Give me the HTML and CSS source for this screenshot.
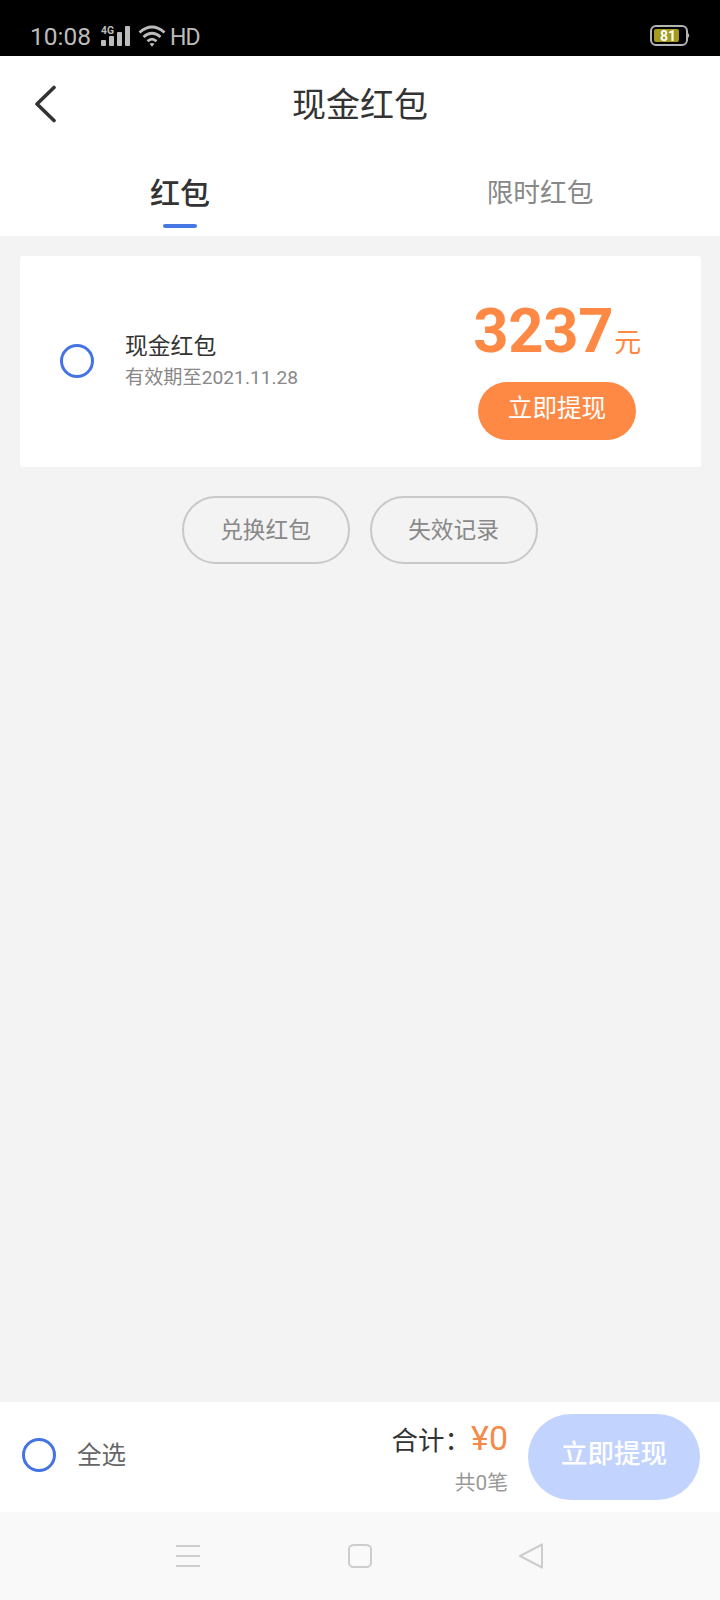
FILE: index.html
```
<!DOCTYPE html>
<html lang="zh-CN">

<head>
    <meta charset="UTF-8">
    <meta name="viewport" content="width=device-width, initial-scale=1.0">
    <title>现金红包</title>
    <link rel="stylesheet" href="styles.css">
</head>

<body>
    <div class="status-bar">
        <span class="time">10:08</span>
        <svg class="signal" width="30" height="21" viewBox="0 0 30 21">
            <text x="0" y="9" textLength="13" lengthAdjust="spacingAndGlyphs">4G</text>
            <rect x="0" y="15" width="5" height="6" rx="1" />
            <rect x="8" y="11" width="5" height="10" rx="1" />
            <rect x="16" y="7" width="5" height="14" rx="1" />
            <rect x="24" y="1" width="5" height="20" rx="1" />
        </svg>
        <svg class="wifi" width="28" height="22" viewBox="0 0 28 22">
            <path d="M1.5 7.5Q14 -3.5 26.5 7.5" />
            <path d="M5.5 12Q14 4.5 22.5 12" />
            <path d="M9.5 16.2Q14 12 18.5 16.2" />
            <path class="dot" d="M11.5 18.7Q14 17.500 16.5 18.7L14 21.8z" />
        </svg>
        <span class="hd">HD</span>
        <svg class="battery" width="42" height="22" viewBox="0 0 42 22">
            <rect class="shell" x="1" y="1" width="36" height="19" rx="5" />
            <path class="nub" d="M38 8q2.500 2.500 0 5z" />
            <rect class="level" x="4" y="4" width="25" height="13" rx="2" />
            <text x="10" y="15.500">81</text>
        </svg>
    </div>

    <header class="header">
        <svg class="back" width="24" height="38" viewBox="0 0 24 38">
            <path d="M20 2.500L3 19L20 35.500" />
        </svg>
        <h1>现金红包</h1>
    </header>

    <nav class="tabs">
        <div class="tab active">红包</div>
        <div class="tab">限时红包</div>
    </nav>

    <main class="content">
        <div class="card">
            <span class="radio"></span>
            <div class="info">
                <div class="name">现金红包</div>
                <div class="expire">有效期至2021.11.28</div>
            </div>
            <div class="right">
                <div class="amount">3237<span class="unit">元</span></div>
                <button class="withdraw" type="button">立即提现</button>
            </div>
        </div>
        <div class="links">
            <button class="pill" type="button">兑换红包</button>
            <button class="pill" type="button">失效记录</button>
        </div>
    </main>

    <footer class="footer">
        <span class="radio"></span>
        <span class="all">全选</span>
        <div class="total">
            <div class="sum">合计：<span class="price">¥0</span></div>
            <div class="count">共0笔</div>
        </div>
        <button class="submit" type="button">立即提现</button>
    </footer>

    <div class="nav-bar">
        <svg width="26" height="26" viewBox="0 0 26 26">
            <path d="M1 3H25M1 13H25M1 23H25" />
        </svg>
        <svg width="26" height="26" viewBox="0 0 26 26">
            <rect x="2" y="2" width="22" height="22" rx="4.500" />
        </svg>
        <svg width="26" height="26" viewBox="0 0 26 26">
            <path d="M23 1.500V24.500L1 13z" />
        </svg>
    </div>
</body>

</html>
```
FILE: styles.css
```
* {
    box-sizing: border-box;
}

body {
    margin: 0;
    width: 720px;
    height: 1600px;
    display: flex;
    flex-direction: column;
    background: #f3f3f3;
    color: #333;
    font-family: Roboto, "Noto Sans CJK SC", sans-serif;
}

button {
    border: 0;
    padding: 0;
    font-family: inherit;
}

.status-bar {
    height: 56px;
    padding: 24px 29px 0 30px;
    display: flex;
    align-items: flex-start;
    background: #000;
    color: #bcbcbc;
    line-height: 26px;
}

.time {
    width: 71px;
    font-size: 24.5px;
}

.signal {
    margin-top: 1px;
    fill: #bcbcbc;
}

.signal text {
    font-size: 11px;
    font-weight: bold;
}

.wifi {
    margin: 1px 4px 0 7px;
    fill: none;
    stroke: #bcbcbc;
    stroke-width: 2.8;
}

.wifi .dot {
    fill: #bcbcbc;
    stroke: none;
}

.hd {
    font-size: 23px;
    letter-spacing: -0.8px;
    line-height: 27px;
}

.battery {
    margin: 1px -1px 0 auto;
}

.shell {
    fill: none;
    stroke: #b4b4b4;
    stroke-width: 2;
}

.nub {
    fill: #b4b4b4;
}

.level {
    fill: #a59a1c;
}

.battery text {
    fill: #fff;
    font-size: 14px;
    font-weight: bold;
}

.header {
    height: 94px;
    padding: 0 34px;
    display: grid;
    grid-template-columns: 24px 1fr 24px;
    align-items: center;
    background: #fff;
}

.back {
    margin-top: 2px;
    fill: none;
    stroke: #333;
    stroke-width: 3.6;
    stroke-linecap: round;
    stroke-linejoin: round;
}

h1 {
    margin: 3px 0 0;
    font-size: 34px;
    font-weight: normal;
    line-height: 50px;
    text-align: center;
}

.tabs {
    height: 86px;
    display: flex;
    background: #fff;
}

.tab {
    flex: 1;
    padding-top: 23px;
    display: flex;
    flex-direction: column;
    align-items: center;
    color: #888;
    font-size: 26.7px;
    line-height: 40px;
}

.tab.active {
    padding-top: 24px;
    color: #333;
    font-size: 30px;
    font-weight: 500;
}

.tab.active::after {
    content: "";
    width: 34px;
    height: 4px;
    margin-top: 10px;
    border-radius: 2px;
    background: #4678e4;
}

.content {
    flex: 1;
    padding: 20px 19px 0 20px;
}

.card {
    height: 211px;
    padding-left: 40px;
    display: flex;
    background: #fff;
    border-radius: 3px;
}

.radio {
    width: 34px;
    height: 34px;
    border: 3.5px solid #4474e2;
    border-radius: 50%;
}

.card .radio {
    margin-top: 88px;
}

.info {
    margin: 75px 0 0 31px;
}

.name {
    font-size: 22.8px;
    line-height: 32px;
}

.expire {
    color: #888;
    font-size: 19.2px;
    line-height: 30px;
}

.right {
    width: 170px;
    margin: 39px 59px 0 auto;
    display: flex;
    flex-direction: column;
    align-items: center;
}

.amount {
    height: 87px;
    color: #fd8945;
    font-size: 61.5px;
    font-weight: bold;
    letter-spacing: -0.3px;
    line-height: 72px;
    white-space: nowrap;
}

.unit {
    margin-left: 1px;
    font-size: 27px;
    font-weight: normal;
    line-height: 1;
}

.withdraw {
    width: 158px;
    height: 58px;
    padding-bottom: 11px;
    border-radius: 29px;
    background: #fd8945;
    color: #fff;
    font-size: 24.6px;
}

.links {
    padding: 29px 2px 0 0;
    display: flex;
    justify-content: center;
    gap: 20px;
}

.pill {
    width: 168px;
    height: 68px;
    padding-bottom: 3px;
    border: 2px solid #c8c8c8;
    border-radius: 34px;
    background: none;
    color: #888;
    font-size: 22.7px;
}

.footer {
    height: 110px;
    padding: 0 20px 0 22px;
    display: flex;
    background: #fff;
}

.footer .radio {
    margin-top: 36px;
}

.all {
    margin: 35px 0 0 21px;
    color: #666;
    font-size: 24.5px;
    line-height: 38px;
}

.total {
    margin: 13px 20px 0 auto;
    text-align: right;
}

.sum {
    font-size: 26.5px;
    line-height: 46px;
    height: 52px;
}

.price {
    color: #f68a48;
    font-size: 34px;
}

.count {
    color: #999;
    font-size: 20.8px;
    line-height: 32px;
}

.submit {
    width: 172px;
    height: 86px;
    margin-top: 12px;
    padding-bottom: 12px;
    border-radius: 43px;
    background: #c2d3fe;
    color: #fff;
    font-size: 26.5px;
    font-weight: 500;
}

.nav-bar {
    height: 88px;
    padding: 31px 175px 0;
    display: flex;
    justify-content: space-between;
    background: #f9f9f9;
}

.nav-bar svg {
    fill: none;
    stroke: #cdcdcd;
    stroke-width: 2;
    stroke-linejoin: round;
}
```
